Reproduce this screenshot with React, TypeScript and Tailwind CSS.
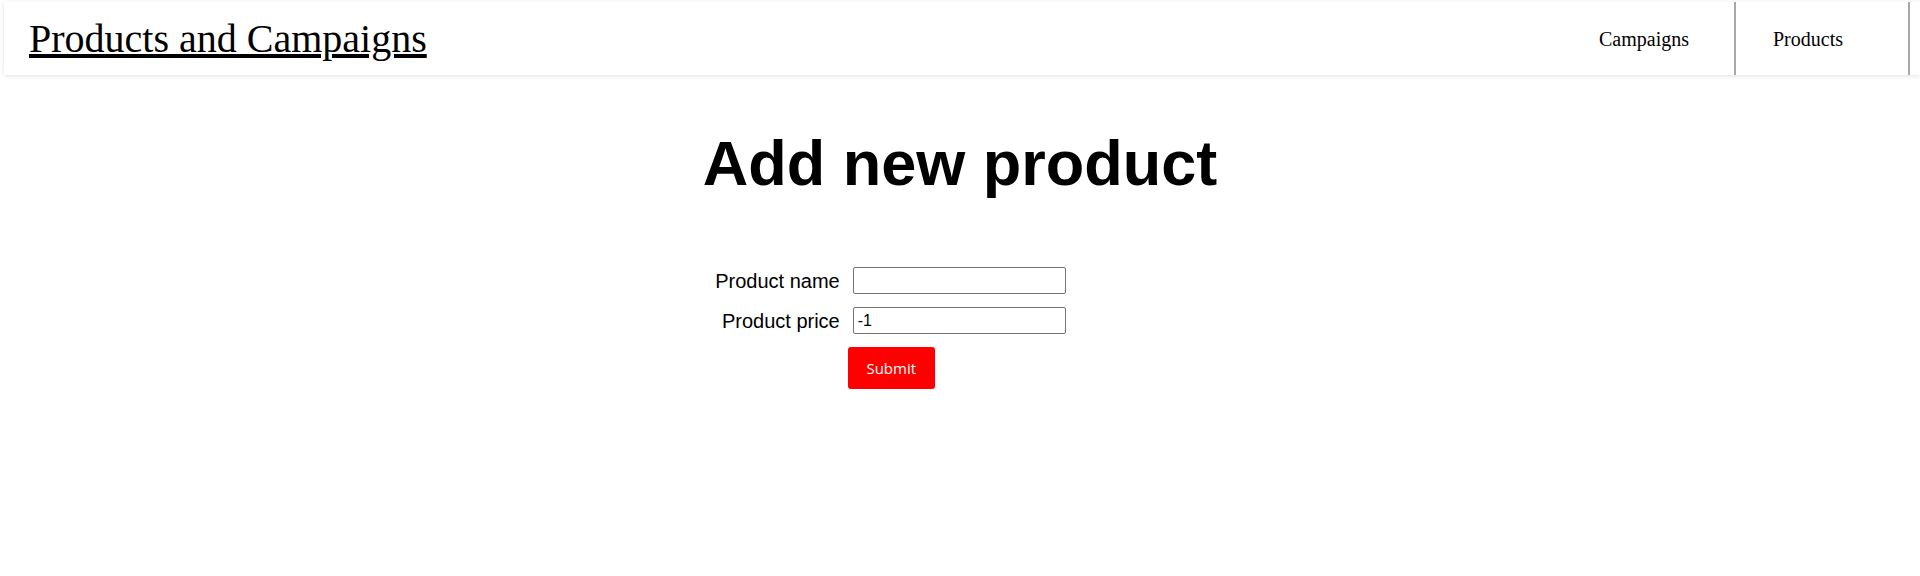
import React, { useState } from 'react';

function Header() {
  return (
    <header className="ml-1 mt-0.5 h-[73px] bg-white shadow-[0_1px_5px_rgba(0,0,0,0.12)] flex items-center justify-between">
      <a href="#" className="pl-[25px] text-[40px] leading-none text-black underline font-['Liberation_Serif',serif]">
        Products and Campaigns
      </a>
      <nav className="flex h-full mr-[10px]">
        {['Campaigns', 'Products'].map(item => (
          <a
            key={item}
            href="#"
            className="w-[174px] h-full flex items-center pl-[37px] border-r-2 border-[#a8a8a8] text-[20px] text-black font-['Liberation_Serif',serif]"
          >
            {item}
          </a>
        ))}
      </nav>
    </header>
  );
}

function App() {
  const [name, setName] = useState('');
  const [price, setPrice] = useState('-1');

  return (
    <div className="min-h-screen bg-white font-['Liberation_Sans',Arial,sans-serif]">
      <Header />

      <main className="flex flex-col items-center">
        <h1 className="mt-[52px] text-[63px] font-bold text-black leading-[72px]">Add new product</h1>

        {/* third column is empty, keeps the table off-centre like the original */}
        <form
          className="mt-[68px] grid grid-cols-[auto_213px_126px] gap-x-[13px] gap-y-[13px] items-center"
          onSubmit={e => e.preventDefault()}
        >
          <label className="text-[20px] text-black text-right leading-none whitespace-nowrap">Product name</label>
          <input
            value={name}
            onChange={e => setName(e.target.value)}
            className="h-[27px] border border-[#767676] rounded-[2px] pl-1 text-[16px] text-black"
          />
          <div />

          <label className="text-[20px] text-black text-right leading-none whitespace-nowrap">Product price</label>
          <input
            value={price}
            onChange={e => setPrice(e.target.value)}
            className="h-[27px] border border-[#767676] rounded-[2px] pl-1 text-[16px] text-black"
          />
          <div />

          <div />
          <button
            type="submit"
            className="-ml-[5px] w-[87px] h-[42px] bg-[#ff0000] rounded-[3px] text-white text-[15px] font-['Open_Sans',sans-serif]"
          >
            Submit
          </button>
          <div />
        </form>
      </main>
    </div>
  );
}

export default App;
